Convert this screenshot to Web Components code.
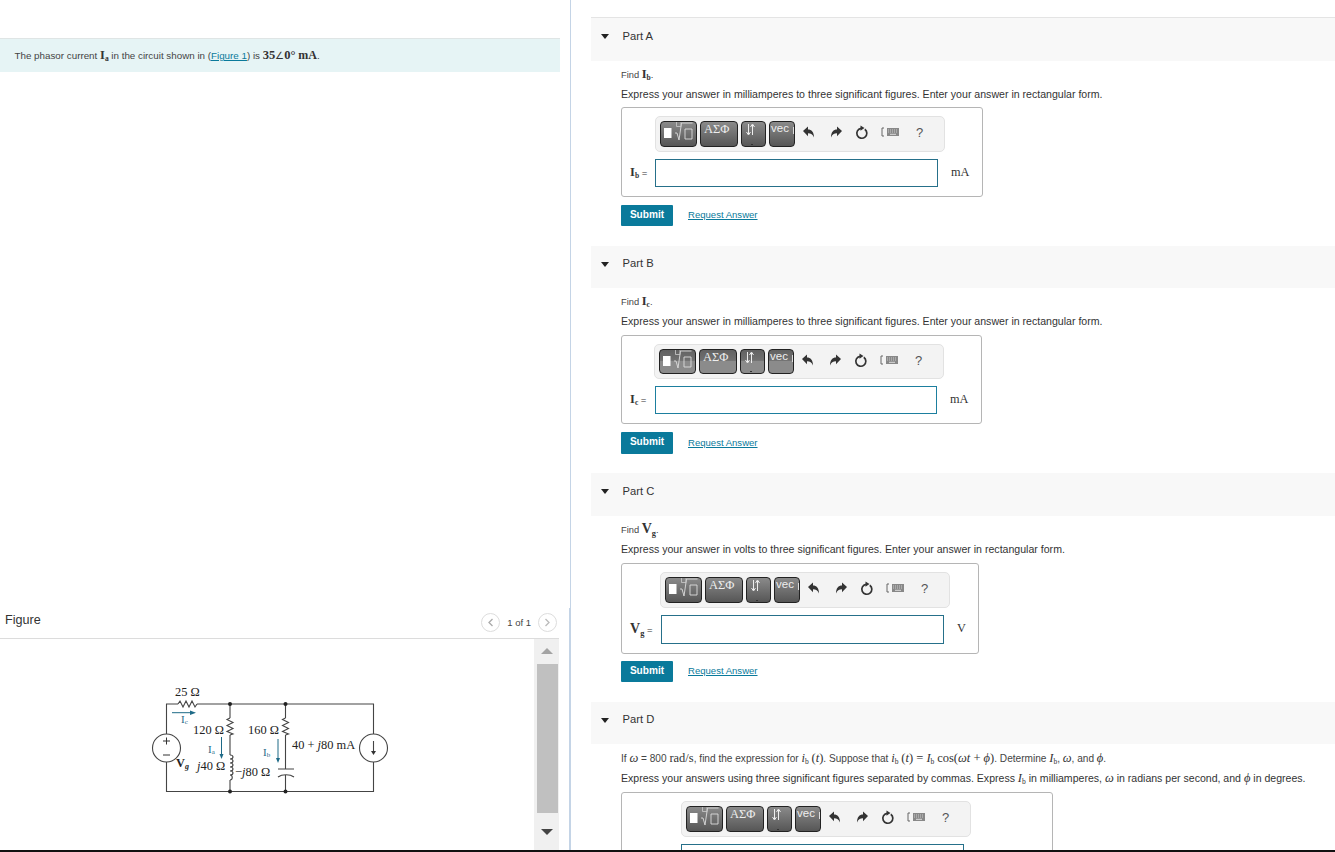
<!DOCTYPE html>
<html lang="en"><head><meta charset="utf-8"><title>Phasor current</title>
<style>
html,body{margin:0;padding:0;height:852px;overflow:hidden;background:#fff}
body{font-family:"Liberation Sans",Arial,sans-serif;color:#333}
app-shell{--link:#0a7a9b}
</style></head>
<body>
<app-shell>
  <left-pane slot="left">
    <intro-banner>The phasor current <math-var b sub="a">I</math-var> in the circuit shown in (<a-link>Figure 1</a-link>) is <math-var b>35</math-var><math-var style="font-size:10px">∠</math-var><math-var b>0°</math-var> <math-var b style="font-size:12px">mA</math-var>.</intro-banner>
    <figure-panel></figure-panel>
  </left-pane>
  <right-pane slot="right">
    <part-section label="Part A" style="--h:43px;--bt:1px;--pitch:229px">
      <p-line style="--t:6px"><small-t>Find </small-t><math-var b sub="b">I</math-var><small-t>.</small-t></p-line>
      <p-line>Express your answer in milliamperes to three significant figures. Enter your answer in rectangular form.</p-line>
      <answer-box unit="mA" style="--label:25px;--w:362px"><math-var b sub="b">I</math-var> =</answer-box>
      <submit-row></submit-row>
    </part-section>
    <part-section label="Part B" style="--h:42px;--pitch:227px">
      <p-line style="--t:6px"><small-t>Find </small-t><math-var b sub="c">I</math-var><small-t>.</small-t></p-line>
      <p-line>Express your answer in milliamperes to three significant figures. Enter your answer in rectangular form.</p-line>
      <answer-box unit="mA" style="--label:25px;--w:361px;--input:282px;--ic:#1d7f9f;--mt:7px;--tb:35px;--tm:-1px;--btn:linear-gradient(#626262,#707070 45%,#8b8b8b 50%,#8b8b8b);--bh:25px"><math-var b sub="c">I</math-var> =</answer-box>
      <submit-row style="--sh:22px"></submit-row>
    </part-section>
    <part-section label="Part C" style="--h:43px;--pitch:229px">
      <p-line style="--t:6px"><small-t>Find </small-t><math-var b sub="g" big>V</math-var><small-t>.</small-t></p-line>
      <p-line>Express your answer in volts to three significant figures. Enter your answer in rectangular form.</p-line>
      <answer-box unit="V" style="--label:31px;--w:358px;--mt:7px;--tm:-1px;--ih:29px"><math-var b sub="g" big>V</math-var> =</answer-box>
      <submit-row style="--sm:7px"></submit-row>
    </part-section>
    <part-section label="Part D" style="--h:42px;--pitch:150px">
      <p-line style="--t:7px;--s:10.1px"><small-t>If <math-var i>ω</math-var> = 800 <math-var>rad/s</math-var>, find the expression for <math-var i sub="b">i</math-var> <math-var>(<i>t</i>)</math-var>. Suppose that <math-var i sub="b">i</math-var> <math-var>(<i>t</i>) = <i>I</i></math-var><math-var sub="b"></math-var> <math-var>cos(<i>ωt</i> + <i>ϕ</i>)</math-var>. Determine <math-var i sub="b">I</math-var>, <math-var i>ω</math-var>, and <math-var i>ϕ</math-var>.</small-t></p-line>
      <p-line style="--f:10.55px">Express your answers using three significant figures separated by commas. Express <math-var i sub="b">I</math-var> in milliamperes, <math-var i>ω</math-var> in radians per second, and <math-var i>ϕ</math-var> in degrees.</p-line>
      <answer-box style="--label:51px;--w:432px;--mt:7px"></answer-box>
    </part-section>
  </right-pane>
</app-shell>
<script>
function def(name, css, html){
  customElements.define(name, class extends HTMLElement{
    connectedCallback(){
      if(this.shadowRoot) return;
      const r=this.attachShadow({mode:'open'});
      r.innerHTML='<style>'+css+'</style>'+(typeof html==='function'?html(this):html);
    }
  });
}
def('app-shell',`:host{display:flex;flex-direction:column;height:852px;overflow:hidden}
.main{display:flex;height:850px;overflow:hidden}.bar{height:2px;background:#111;flex:none}`,
`<div class="main"><slot name="left"></slot><slot name="right"></slot></div><div class="bar"></div>`);
def('left-pane',`:host{display:flex;flex-direction:column;justify-content:space-between;box-sizing:content-box;width:570px;height:850px;border-right:1px solid #c4d4e6;flex:none}`,`<slot></slot>`);
def('right-pane',`:host{display:block;flex:1;padding:17px 0 0 20px;min-width:0;overflow:hidden}`,`<slot></slot>`);
def('intro-banner',`:host{display:block;box-sizing:border-box;margin-top:38px;width:560px;height:34px;line-height:33px;padding:0 0 0 14.5px;background:#e6f4f5;border-top:1px solid #dfe5e5;font-size:9.8px;color:#444;white-space:nowrap}`,`<slot></slot>`);
def('a-link',`:host{color:var(--link);text-decoration:underline}`,`<slot></slot>`);
def('small-t',`:host{display:inline;font-size:var(--s,9.3px);color:#444}`,`<slot></slot>`);
def('math-var',`:host{font-family:"Liberation Serif",serif;font-size:12.5px;color:#333}
:host([b]){font-weight:bold}:host([i]){font-style:italic}:host([big]){font-size:14px}
sub{font-size:.6em;line-height:0;vertical-align:-.3em;font-style:normal}`,
h=>`<slot></slot>${h.getAttribute('sub')?`<sub>${h.getAttribute('sub')}</sub>`:''}`);
def('p-line',`:host{display:block;height:14px;line-height:14px;margin:var(--t,6px) 0 0;font-size:var(--f,10.58px);color:#333;white-space:nowrap}`,`<slot></slot>`);
def('part-section',`:host{display:block;height:var(--pitch);box-sizing:border-box}
.h{display:flex;align-items:center;box-sizing:border-box;height:calc(var(--h) + var(--bt,0px));background:#f8f8f8;border-top:var(--bt,0) solid #e4e4e4;font-size:11.2px;color:#333}
.t{width:0;height:0;margin-left:10px;border:4px solid transparent;border-top:5px solid #222;border-bottom:0}
.l{margin-left:13.5px;position:relative;top:-4px}.c{padding-left:30px}`,
h=>`<div class="h"><span class="t" style="position:relative;top:-3px"></span><span class="l">${h.getAttribute('label')}</span></div><div class="c"><slot></slot></div>`);
def('math-toolbar',`:host{display:flex;align-items:center;box-sizing:border-box;width:290px;height:100%;padding:0 0 1px 4px;background:#f3f3f3;border:1px solid #e2e2e2;border-radius:5px}
.b{box-sizing:border-box;position:relative;height:var(--bh,26px);border:1px solid #222;border-radius:4px;background:var(--btn,linear-gradient(#8a8a8a,#565656));margin-right:3px;color:#eee;overflow:hidden;font-family:"Liberation Serif",serif;font-size:12.5px;line-height:15px;text-align:left;padding-left:3px;flex:none}
.v{font-family:"Liberation Sans",sans-serif;font-size:11.5px;line-height:12px;padding-left:1px}
.v::after{content:"";position:absolute;right:0;top:5px;width:1px;height:7px;background:#ddd}
.d3::after{content:"";position:absolute;left:9px;bottom:1px;width:2px;height:1px;background:#333}
.q{font-size:13px;color:#555;font-family:"Liberation Sans",sans-serif;position:absolute;top:-8px}
.tools{position:relative;height:1px;flex:1}.tools>*{position:absolute}`,
`<div class="b" style="width:37px;padding:0"><svg width="35" height="24" viewBox="0 0 35 24"><rect x="3" y="6" width="7.500" height="10" fill="#fff"/><path d="M14 11h2l2 7 2.500-17h11M24 7h7v10h-7z" fill="none" stroke="#ddd" stroke-width=".9"/><path d="M15.500 0v4.500h4.500V0" stroke="#ccc" fill="none" stroke-width=".8"/></svg></div>
<div class="b" style="width:38px">ΑΣΦ</div>
<div class="b d3" style="width:25px;padding:0"><svg width="23" height="20" viewBox="0 0 23 20"><path d="M6.500 2v10M4.500 10l2 3 2-3M10.500 13V3M8.500 5l2-3 2 3" fill="none" stroke="#eee"/></svg></div>
<div class="b v" style="width:26px">vec</div>
<div class="tools">
<svg style="left:4px;top:-7px" width="13" height="12" viewBox="0 0 13 12"><path d="M1 5l5-4.500V3.500c3.500 0 6 2.500 6 8-1.200-3-3-4.200-6-4.200v3z" fill="#333"/></svg>
<svg style="left:32px;top:-7px" width="13" height="12" viewBox="0 0 13 12"><path d="M12 5L7 .5V3.500c-3.500 0-6 2.500-6 8 1.200-3 3-4.200 6-4.200v3z" fill="#333"/></svg>
<svg style="left:57px;top:-8px" width="14" height="15" viewBox="0 0 14 15"><path d="M9.800 4.200A5 5 0 1 1 6 3.300" fill="none" stroke="#333" stroke-width="1.700"/><path d="M5.500 .5L9.500 3 5.500 5.700z" fill="#333"/></svg>
<svg style="left:83px;top:-6px" width="19" height="10" viewBox="0 0 19 10"><path d="M3 1H1v8h2" fill="none" stroke="#666"/><rect x="6" y="1" width="12" height="8" fill="#888"/><path d="M7 3h10M7 5h10" stroke="#ddd" stroke-width=".8" stroke-dasharray="1 1"/><path d="M9 7.300h6" stroke="#ddd"/></svg>
<span class="q" style="left:118px">?</span>
</div>`);
def('answer-box',`:host{display:grid;box-sizing:border-box;width:var(--w);margin-top:var(--mt,6px);border:1px solid #b5b5b5;border-radius:3px;padding:8px 0 9px 8px;grid-template-columns:var(--label) auto 1fr;grid-template-rows:var(--tb,36px) var(--ih,28px);row-gap:7px;font-family:"Liberation Serif",serif;font-size:10px}
math-toolbar{grid-column:2/4;margin-left:var(--tm,0)}
.l{align-self:center;white-space:nowrap;font-family:"Liberation Sans",sans-serif;font-size:9.5px;position:relative;top:-1px}
.in{box-sizing:border-box;width:var(--input,283px);height:var(--ih,28px);border:1px solid var(--ic,#26708a);background:#fff}
.u{align-self:center;padding-left:13px;font-size:12.3px;color:#333;position:relative;top:-1px}`,
h=>`<div style="grid-column:1"></div><math-toolbar></math-toolbar><div class="l"><slot></slot></div><div class="in"></div><div class="u">${h.getAttribute('unit')||''}</div>`);
def('submit-row',`:host{display:flex;align-items:center;margin-top:var(--sm,8px);height:var(--sh,21px);font-size:10px}
.s{box-sizing:border-box;width:52px;height:100%;line-height:20px;text-align:center;background:#0a7a9b;color:#fff;border-radius:1px;font-weight:bold;font-size:10.1px}
a{margin-left:15px;color:#0a7a9b;text-decoration:underline;font-size:9.55px;position:relative;top:-1px}`,`<span class="s">Submit</span><a>Request Answer</a>`);
def('figure-panel',`:host{display:flex;flex-direction:column;box-sizing:border-box;height:242px;width:570px;padding-right:10px;border-right:1px solid #c4d4e6}
.h{display:flex;align-items:center;box-sizing:border-box;border-bottom:1px solid #dcdcdc;flex:none;font-size:12.6px;color:#333;padding-left:5px;height:31px}
.f{flex:1;position:relative;top:-3px}.n{display:flex;align-items:center;font-size:9.5px;color:#444;position:relative;top:-1px;padding:0 2px 0 0}
.c{box-sizing:border-box;width:19px;height:19px;border:1px solid #ddd;border-radius:50%;display:flex;align-items:center;justify-content:center}
.x{margin:0 7px}
.b{display:flex;flex:1;min-height:0}.p{flex:1;padding:41px 0 0 140px}`,
`<div class="h"><span class="f">Figure</span><span class="n"><span class="c"><svg width="7" height="9" viewBox="0 0 7 9"><path d="M5.500 1L2 4.500 5.500 8" fill="none" stroke="#aaa" stroke-width="1.300"/></svg></span><span class="x">1 of 1</span><span class="c"><svg width="7" height="9" viewBox="0 0 7 9"><path d="M1.500 1L5 4.500 1.500 8" fill="none" stroke="#bbb" stroke-width="1.300"/></svg></span></span></div>
<div class="b"><div class="p"><circuit-diagram></circuit-diagram></div><scroll-rail></scroll-rail></div>`);
def('scroll-rail',`:host{display:flex;flex-direction:column;align-items:center;box-sizing:border-box;width:25px;height:211px;background:#f0f0f0;flex:none;padding:9px 0 0 1px}
.u,.d{width:0;height:0;border:6px solid transparent;border-top:0;border-bottom:6px solid #a3a3a3}
.d{border-bottom:0;border-top:6px solid #444;margin-top:16px}.t{width:21px;height:149px;background:#c0c0c0;margin:10px 0 0}`,
`<div class="u"></div><div class="t"></div><div class="d"></div>`);
def('circuit-diagram',`:host{display:block;width:260px;height:125px}svg{display:block}
text{font-family:"Liberation Serif",serif;font-size:12.4px;fill:#222}
.lb{fill:#1e6a87;font-size:11px}.w{fill:none;stroke:#444;stroke-width:1.1}`,
`<svg width="260" height="125" viewBox="140 680 260 125">
<path class="w" d="M166.500 734V704H178M197 704H373.500V734M373.500 762V791.500H166.500V762M230 704V718M230 735V755M230 780V791.500M285.500 704V718M285.500 735V769M285.500 775V791.500"/>
<path class="w" d="M178 704l2-3 3 6 3-6 3 6 3-6 3 6 2-3"/>
<path class="w" d="M230 718l-3 1.500 6 3-6 3 6 3-6 3 6 2.500-3 1"/>
<path class="w" d="M285.500 718l-3 1.500 6 3-6 3 6 3-6 3 6 2.500-3 1"/>
<path class="w" d="M230 755c4 0 4 4 0 4 4 0 4 4 0 4 4 0 4 4 0 4 4 0 4 4 0 4 4 0 4 4 0 4 3 0 3 5 0 5"/>
<path class="w" d="M278 769h16M278 777c4-3 12-3 16 0"/>
<circle cx="230" cy="704" r="2" fill="#222"/><circle cx="285.500" cy="704" r="2" fill="#222"/><circle cx="230" cy="791.500" r="2" fill="#222"/><circle cx="285.500" cy="791.500" r="2" fill="#222"/>
<circle class="w" cx="166.500" cy="748" r="14"/><circle class="w" cx="373.500" cy="748" r="14"/>
<path class="w" d="M373.500 741v12"/><path d="M371 751h5l-2.500 4z" fill="#333"/>
<path d="M163 741h7M166.500 737.500v7M163 755h7" stroke="#333" fill="none"/>
<path d="M172 712.700h20" stroke="#1e6a87"/><path d="M190 710.500l6 2.200-6 2.200z" fill="#1e6a87"/>
<path d="M221.500 737v18" stroke="#1e6a87"/><path d="M219.500 754l2 5 2-5z" fill="#1e6a87"/>
<path d="M278 739v20" stroke="#1e6a87"/><path d="M276 758l2 5 2-5z" fill="#1e6a87"/>
<text x="175" y="696">25 Ω</text>
<text x="193" y="734">120 Ω</text><text x="248" y="734">160 Ω</text>
<text x="292" y="749">40 + <tspan font-style="italic">j</tspan>80 mA</text>
<text x="197" y="770"><tspan font-style="italic">j</tspan>40 Ω</text>
<text x="235" y="776">−<tspan font-style="italic">j</tspan>80 Ω</text>
<text x="176" y="767" font-weight="bold">V<tspan font-style="italic" font-size="8" dy="2">g</tspan></text>
<text class="lb" x="181" y="723">I<tspan font-size="7" dy="1">c</tspan></text>
<text class="lb" x="208" y="753">I<tspan font-size="7" dy="1">a</tspan></text>
<text class="lb" x="263" y="756">I<tspan font-size="7" dy="1">b</tspan></text>
</svg>`);
</script>
</body></html>
